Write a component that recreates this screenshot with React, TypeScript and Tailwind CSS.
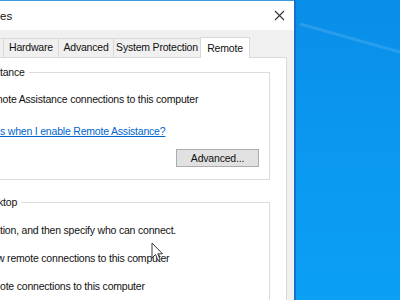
import React from "react";

const font = { fontFamily: '"Liberation Sans", Arial, sans-serif' };

const Tab = ({ label, width, active }: { label: string; width: string; active?: boolean }) => {
  if (active) {
    return (
      <div
        className={`${width} relative z-10 -mb-px flex h-[21px] items-start justify-center border-x border-t border-[#d9d9d9] bg-white pt-[3px]`}
      >
        {label}
      </div>
    );
  }
  return (
    <div className={`${width} flex h-[19px] items-center justify-center border-t border-r border-[#d9d9d9] bg-[#f0f0f0]`}>
      {label}
    </div>
  );
};

const Cursor = () => (
  <svg width="13" height="20" viewBox="0 0 13 20" className="absolute left-[151px] top-[242px]">
    <path
      d="M1 1 L1 16 L4.5 12.5 L7 18.5 L9.2 17.5 L6.8 11.8 L11.5 11.8 Z"
      fill="#ffffff"
      stroke="#3a3a3a"
      strokeWidth="1"
      strokeLinejoin="round"
    />
  </svg>
);

export default function App() {
  return (
    <div
      className="relative flex h-[300px] w-[400px] overflow-hidden bg-[#0b95ee] text-[10.5px] tracking-[-0.2px] text-[#111111]"
      style={font}
    >
      {/* Dialog window, left part off screen */}
      <div className="flex w-[296px] shrink-0 flex-col border-r-2 border-[#1672c9] bg-white">
        {/* Title bar */}
        <div className="flex h-[30px] shrink-0 items-center justify-between border-t border-[#3b9be0] pr-[8px]">
          <span className="mt-[2px] text-[11.5px] tracking-normal">es</span>
          <svg width="11" height="11" viewBox="0 0 11 11" className="mr-[1px] mb-[1px]">
            <path d="M1 1 L10 10 M10 1 L1 10" stroke="#333" strokeWidth="1.1" />
          </svg>
        </div>

        {/* Body */}
        <div className="flex min-h-0 flex-1 flex-col overflow-hidden bg-[#f0f0f0] pr-[7px]">
          {/* Tabs */}
          <div className="flex h-[27px] shrink-0 items-end">
            <Tab label="" width="w-[4px]" />
            <Tab label="Hardware" width="w-[55px]" />
            <Tab label="Advanced" width="w-[55px]" />
            <div className="flex h-[19px] w-[86px] items-center justify-center border-t border-[#d9d9d9] bg-[#f0f0f0]">
              System Protection
            </div>
            <Tab label="Remote" width="w-[50px]" active />
          </div>

          {/* Panel */}
          <div className="min-h-0 flex-1 overflow-hidden border-t border-r border-[#d9d9d9] bg-white pr-[16px] leading-[14px]">
            <fieldset className="mt-[7px] border border-l-0 border-[#dcdcdc] pb-[12px] pr-[10px]">
              <legend className="pr-[4px]">tance</legend>
              <div className="flex flex-col">
                <div className="mt-[13px] whitespace-nowrap">
                  <span className="-ml-[6px]">mote Assistance connections to this computer</span>
                </div>
                <div className="mt-[18px] whitespace-nowrap text-[#0066cc] underline">
                  s when I enable Remote Assistance?
                </div>
                <div className="mt-[11px] flex justify-end">
                  <button className="h-[18px] w-[83px] border border-[#adadad] bg-[#e1e1e1] tracking-[-0.2px]">
                    Advanced...
                  </button>
                </div>
              </div>
            </fieldset>

            <fieldset className="mt-[15px] h-[200px] border border-l-0 border-[#dcdcdc]">
              <legend className="pr-[4px]">
                <span className="-ml-[2px]">ktop</span>
              </legend>
              <div className="flex flex-col gap-[14px] whitespace-nowrap">
                <div className="mt-[14px]">tion, and then specify who can connect.</div>
                <div>
                  <span className="-ml-[3px]">w remote connections to this computer</span>
                </div>
                <div>ote connections to this computer</div>
              </div>
            </fieldset>
          </div>
        </div>
      </div>

      {/* Desktop */}
      <div className="relative flex-1 bg-gradient-to-b from-[#0a8ee8] via-[#0b98f0] to-[#0ba0f4]">
        <svg width="104" height="60" viewBox="0 0 104 60" className="absolute left-0 top-0">
          <path d="M4 24 L104 52" stroke="#ffffff" strokeOpacity="0.12" strokeWidth="3" />
        </svg>
      </div>

      <Cursor />
    </div>
  );
}
